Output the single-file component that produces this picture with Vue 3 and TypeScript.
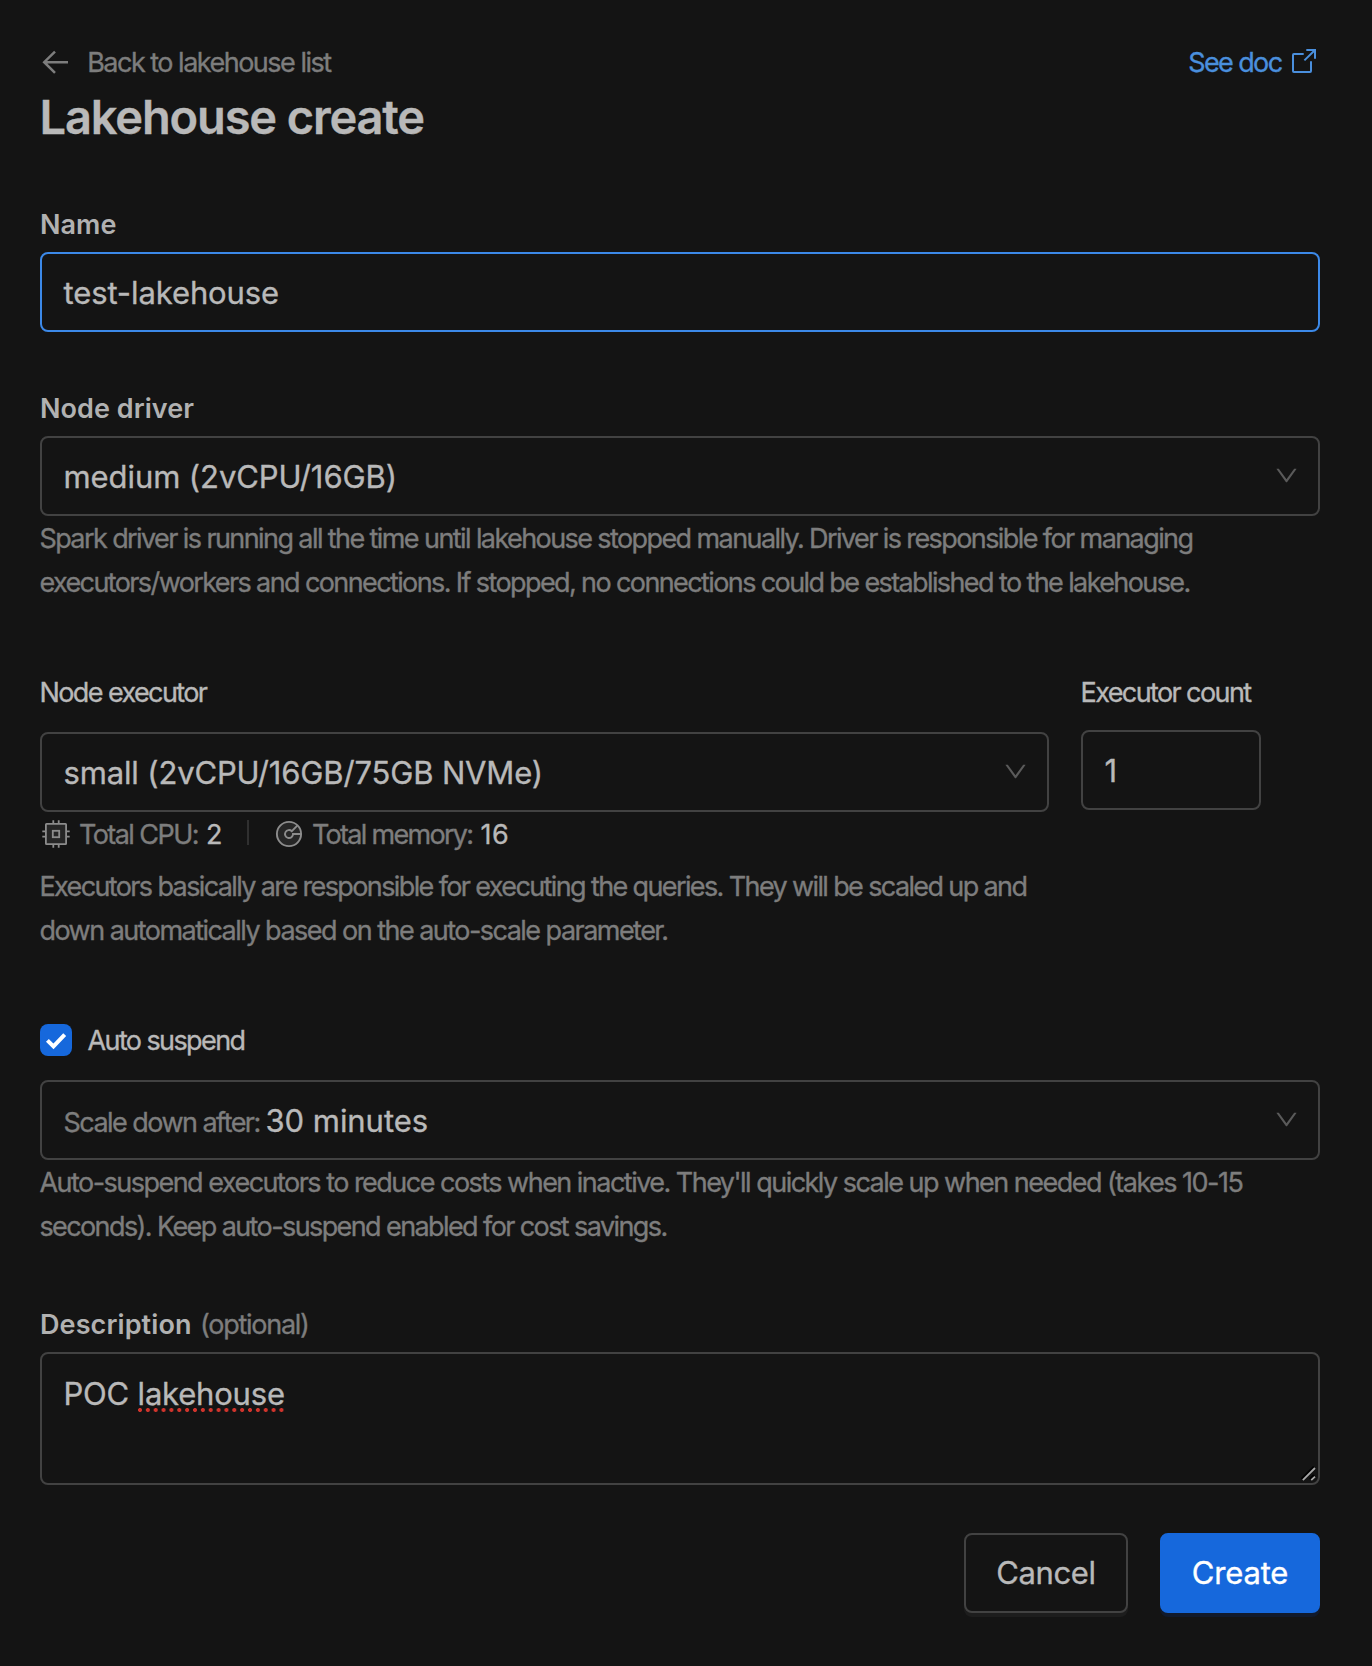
<script setup lang="ts">
import { ref } from 'vue'

interface Option {
  label: string
  cpu: number
  memory: number
}

const name = ref('test-lakehouse')
const driver = ref<Option>({ label: 'medium (2vCPU/16GB)', cpu: 2, memory: 16 })
const executor = ref<Option>({ label: 'small (2vCPU/16GB/75GB NVMe)', cpu: 2, memory: 16 })
const executorCount = ref(1)
const autoSuspend = ref(true)
const suspendAfter = ref('30 minutes')

const chevron =
  'M884 256h-75c-5.1 0-9.9 2.5-12.9 6.6L512 654.2 227.9 262.6c-3-4.1-7.8-6.6-12.9-6.6h-75c-6.5 0-10.3 7.4-6.5 12.7l352.6 486.1c12.8 17.6 39 17.6 51.7 0l352.6-486.1c3.9-5.3.1-12.7-6.4-12.7z'
</script>

<template>
  <main class="page">
    <header class="top">
      <a class="back">
        <svg width="28" height="28" viewBox="0 0 28 28" fill="none" stroke="currentColor" stroke-width="2.5">
          <path d="M15 3.6 4.2 14.2 15 24.8M4.4 14.2H28.3" />
        </svg>
        <span class="t-back">Back to lakehouse list</span>
      </a>
      <a class="doc">
        <span class="t-doc">See doc</span>
        <svg width="24" height="24" viewBox="0 0 24 24" fill="none" stroke="currentColor" stroke-width="2">
          <path d="M11.7 5H1.9Q1 5 1 5.9V22.1Q1 23 1.9 23H18.1Q19 23 19 22.1V12.3" />
          <path d="M14.3 1H23V9.8M23 1 12.4 11.4" />
        </svg>
      </a>
    </header>
    <h1>Lakehouse create</h1>

    <section class="field first">
      <label class="label">Name</label>
      <div class="control focused"><span class="t-input">{{ name }}</span></div>
    </section>

    <section class="field">
      <label class="label">Node driver</label>
      <div class="control">
        <span class="t-medium">{{ driver.label }}</span>
        <svg class="chev" viewBox="0 0 1024 1024"><path :d="chevron" /></svg>
      </div>
      <p class="help">
        <span class="t-h1">Spark driver is running all the time until lakehouse stopped manually. Driver is responsible for managing</span><br />
        <span class="t-h2">executors/workers and connections. If stopped, no connections could be established to the lakehouse.</span>
      </p>
    </section>

    <section class="row">
      <div class="executor">
        <label class="plain">Node executor</label>
        <div class="control gap18">
          <span class="t-small">{{ executor.label }}</span>
          <svg class="chev" viewBox="0 0 1024 1024"><path :d="chevron" /></svg>
        </div>
        <div class="stats">
          <svg class="cpu" width="28" height="28" viewBox="0 0 28 28" fill="none" stroke="currentColor" stroke-width="1.8">
            <rect x="3.9" y="3.9" width="20.2" height="20.2" rx=".6" fill="#262626" />
            <rect x="10.8" y="10.8" width="6.4" height="6.4" />
            <path d="M11.3 .3V3.5M16.7 .3V3.5M11.3 24.5V27.7M16.7 24.5V27.7M.3 11.3H3.5M.3 16.7H3.5M24.5 11.3H27.7M24.5 16.7H27.7" />
          </svg>
          <span class="t-cpu">Total CPU:</span>
          <b class="n-cpu">{{ executor.cpu * executorCount }}</b>
          <i class="divider"></i>
          <svg class="mem" width="28" height="28" viewBox="0 0 28 28" fill="none" stroke="currentColor" stroke-width="1.9">
            <circle cx="14" cy="14" r="12.1" fill="#262626" />
            <path d="M26 14H18A4 4 0 1 1 16.8 11.2L22.3 5.6" />
          </svg>
          <span class="t-mem">Total memory:</span>
          <b class="n-mem">{{ executor.memory * executorCount }}</b>
        </div>
        <p class="help gap8">
          <span class="t-h3">Executors basically are responsible for executing the queries. They will be scaled up and</span><br />
          <span class="t-h4">down automatically based on the auto-scale parameter.</span>
        </p>
      </div>
      <div class="count">
        <label class="plain">Executor count</label>
        <div class="control gap16"><span>{{ executorCount }}</span></div>
      </div>
    </section>

    <section class="suspend">
      <label class="check">
        <span class="box">
          <svg v-if="autoSuspend" width="32" height="32" viewBox="0 0 32 32" fill="none" stroke="#fff" stroke-width="4">
            <path d="M7.4 16.3 13.5 22.4 24.7 10.6" />
          </svg>
        </span>
        <span class="plain">Auto suspend</span>
      </label>
      <div class="control gap18">
        <span class="prefix">Scale down after:</span>
        <span class="t-min">{{ suspendAfter }}</span>
        <svg class="chev" viewBox="0 0 1024 1024"><path :d="chevron" /></svg>
      </div>
      <p class="help">
        <span class="t-h5">Auto-suspend executors to reduce costs when inactive. They'll quickly scale up when needed (takes 10-15</span><br />
        <span class="t-h6">seconds). Keep auto-suspend enabled for cost savings.</span>
      </p>
    </section>

    <section class="field">
      <label class="label t-desc">Description<span class="optional">(optional)</span></label>
      <div class="area">
        <span class="t-poc">POC <span class="misspelt">lakehouse</span></span>
        <svg class="grip" width="16" height="16" viewBox="0 0 16 16" fill="none">
          <path d="M1 13.6 13.4 1.2M9.4 13.6 13.4 9.6" stroke="#000" stroke-width="3.6" />
          <path d="M1.8 14.2 14 2M10.2 14.2 14 10.6" stroke="#a8a8a8" stroke-width="1.8" />
        </svg>
      </div>
    </section>

    <footer class="actions">
      <button class="btn cancel">Cancel</button>
      <button class="btn create">Create</button>
    </footer>
  </main>
</template>

<style>
body {
  background: #141414;
}
</style>

<style scoped>
.page {
  box-sizing: border-box;
  width: 1372px;
  height: 1666px;
  padding: 40px 52px 0 40px;
  background: #141414;
  color: #b9b9b9;
  font-family: Inter, "Open Sans", sans-serif;
  font-size: 27px;
  white-space: nowrap;
  -webkit-text-stroke: .35px currentColor;
}
span { flex: none; }
.top {
  display: flex;
  justify-content: space-between;
  height: 44px;
  line-height: 44px;
}
.back, .doc { display: flex; align-items: center; }
.back { color: #7d7d7d; }
.back span, .doc span { padding-top: 2px; }
.t-back { margin-left: 19.2px; letter-spacing: -1.51px; }
.doc { color: #4a8fdd; margin-right: 4px; }
.doc svg { margin: -2px 0 0 10.5px; }
.t-doc { letter-spacing: -1.62px; }
h1 {
  margin: 3px 0 0 -.5px;
  font-size: 47px;
  line-height: 60px;
  font-weight: 600;
  letter-spacing: -1.15px;
}
.field { margin-top: 56px; }
.field.first { margin-top: 57px; }
.label {
  display: block;
  height: 40px;
  line-height: 42px;
  margin-bottom: 8px;
  font-weight: 600;
  color: #b1b1b1;
  letter-spacing: .05px;
  -webkit-text-stroke-width: 0;
}
.t-desc { letter-spacing: .1px; }
.optional {
  margin-left: 8.5px;
  font-weight: 400;
  letter-spacing: -1.28px;
  color: #7d7d7d;
  -webkit-text-stroke-width: .35px;
}
.control {
  box-sizing: border-box;
  display: flex;
  align-items: center;
  height: 80px;
  padding: 2px 18.5px 0 21.5px;
  border: 2px solid #424242;
  border-radius: 8px;
  font-size: 31px;
  line-height: 48px;
}
.focused { border-color: #3c89e8; }
.t-input { letter-spacing: -.11px; }
.t-medium { letter-spacing: -.08px; }
.t-small { letter-spacing: -.15px; }
.t-min { letter-spacing: -.05px; }
.gap18 { margin-top: 18px; }
.gap16 { margin-top: 16px; }
.chev { width: 27px; height: 27px; margin: -3px 0 0 auto; fill: #5a5a5a; }
.help {
  margin: 0 0 -1px -.6px;
  padding-top: 1px;
  line-height: 44px;
  color: #7d7d7d;
}
.help.gap8 { padding-top: 9px; }
.t-h1 { letter-spacing: -1.591px; }
.t-h2 { letter-spacing: -1.608px; }
.t-h3 { letter-spacing: -1.622px; }
.t-h4 { letter-spacing: -1.53px; }
.t-h5 { letter-spacing: -1.523px; }
.t-h6 { letter-spacing: -1.598px; }
.row { display: flex; gap: 32px; margin-top: 66px; }
.executor { width: 1009px; }
.count { width: 180px; }
.plain {
  display: block;
  height: 44px;
  line-height: 46px;
  letter-spacing: -1.6px;
}
.row .plain { margin-left: -.5px; }
.stats {
  display: flex;
  align-items: center;
  height: 44px;
  line-height: 44px;
  color: #7d7d7d;
}
.stats span, .stats b { padding-top: 2px; }
.stats b { font-weight: 400; color: #b9b9b9; }
.stats svg { color: #8c8c8c; }
.cpu { margin-left: 2px; }
.t-cpu { width: 127px; margin-left: 9px; letter-spacing: -1.57px; }
.n-cpu { width: 41px; }
.divider { width: 2px; height: 25px; margin-top: -3px; background: #303030; }
.mem { margin-left: 26px; }
.t-mem { width: 168.5px; margin-left: 9px; letter-spacing: -1.71px; }
.n-mem { letter-spacing: .6px; }
.suspend { margin-top: 66px; }
.check { display: flex; align-items: center; height: 44px; }
.box {
  width: 32px;
  height: 32px;
  margin-right: 15.5px;
  border-radius: 8px;
  background: #1668dc;
}
.box svg { display: block; }
.prefix { width: 202px; font-size: 27px; letter-spacing: -1.54px; color: #7d7d7d; padding-top: 4px; }
.area {
  position: relative;
  box-sizing: border-box;
  height: 133px;
  padding: 16px 21.5px;
  border: 2px solid #424242;
  border-radius: 8px;
  font-size: 31px;
  line-height: 48px;
}
.t-poc { letter-spacing: -.2px; }
.misspelt { position: relative; }
.misspelt::after {
  content: "";
  position: absolute;
  left: 0;
  top: 33px;
  width: 147px;
  height: 4px;
  background: radial-gradient(circle at 2px 2px, #d0342c 1.7px, transparent 2.3px) 0 0 / 7.87px 4px repeat-x;
}
.grip { position: absolute; right: 1px; bottom: 1px; }
.actions { display: flex; justify-content: flex-end; gap: 32px; margin-top: 48px; }
.btn {
  box-sizing: border-box;
  height: 80px;
  padding: 0;
  border: 2px solid #424242;
  border-radius: 8px;
  background: #141414;
  color: #b9b9b9;
  font: 400 31px/48px Inter, "Open Sans", sans-serif;
  -webkit-text-stroke: .35px currentColor;
}
.cancel { width: 164px; letter-spacing: -.37px; box-shadow: 0 4px 0 rgba(255, 255, 255, .04); }
.create {
  width: 160px;
  border-color: #1668dc;
  background: #1668dc;
  color: #fff;
  letter-spacing: -.16px;
  box-shadow: 0 4px 0 #111a2c;
}
</style>
